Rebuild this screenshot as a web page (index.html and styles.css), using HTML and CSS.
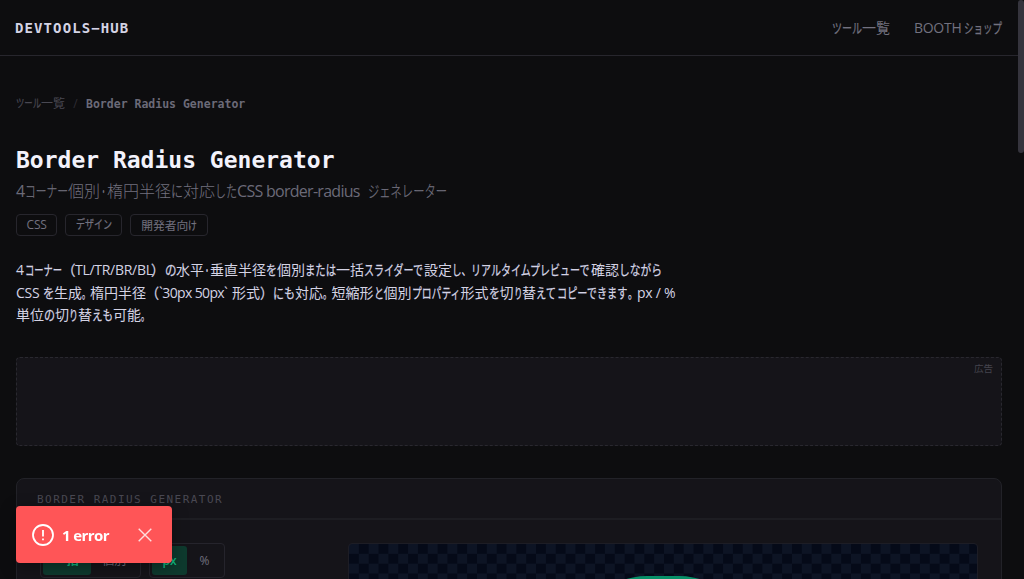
FILE: index.html
```html
<!DOCTYPE html>
<html lang="ja">
<head>
<meta charset="utf-8">
<title>Border Radius Generator</title>
<link rel="stylesheet" href="styles.css">
</head>
<body>
<header class="topbar">
  <div class="brand">DEVTOOLS−HUB</div>
  <nav class="nav">
    <a class="line"><span class="run" style="--n:3;--w:30">ツール</span><span>一覧</span></a>
    <a class="line"><span class="lat" style="--w:50">BOOTH</span><span class="run" style="--n:4;--w:38">ショップ</span></a>
  </nav>
</header>
<main class="page">
  <div class="crumbs">
    <a class="line"><span class="run" style="--n:3;--w:25">ツール</span><span>一覧</span></a>
    <span class="slash">/</span>
    <span class="current">Border Radius Generator</span>
  </div>
  <h1 class="title">Border Radius Generator</h1>
  <p class="subtitle line"><span class="lat" style="--w:9">4</span><span class="run" style="--n:4;--w:43">コーナー</span><span>個別</span><span class="run" style="--n:1;--w:7">・</span><span>楕円半径</span><span class="run" style="--n:1;--w:12">に</span><span>対応</span><span class="run" style="--n:2;--w:22">した</span><span class="lat" style="--w:131">CSS border-radius</span><span class="run" style="--n:7;--w:79">ジェネレーター</span></p>
  <div class="tags">
    <span class="tag line"><span class="lat" style="--w:20">CSS</span></span>
    <span class="tag line"><span class="run" style="--n:4;--w:36">デザイン</span></span>
    <span class="tag line"><span>開発者向</span><span class="run" style="--n:1;--w:9">け</span></span>
  </div>
  <div class="description">
    <div class="line"><span class="lat" style="--w:8.5">4</span><span class="run" style="--n:4;--w:37">コーナー</span><span class="run" style="--n:1;--w:13.5">（</span><span class="lat" style="--w:76">TL/TR/BR/BL</span><span class="run" style="--n:1;--w:13.5">）</span><span class="run" style="--n:1;--w:11.5">の</span><span>水平</span><span class="run" style="--n:1;--w:6">・</span><span>垂直半径</span><span class="run" style="--n:1;--w:11">を</span><span>個別</span><span class="run" style="--n:3;--w:31">または</span><span>一括</span><span class="run" style="--n:6;--w:60">スライダーで</span><span>設定</span><span class="run" style="--n:2;--w:19">し、</span><span class="run" style="--n:12;--w:120">リアルタイムプレビューで</span><span>確認</span><span class="run" style="--n:4;--w:43">しながら</span></div>
    <div class="line"><span class="lat" style="--w:26.5">CSS</span><span class="run" style="--n:1;--w:11.5">を</span><span>生成</span><span class="run" style="--n:1;--w:8">。</span><span>楕円半径</span><span class="run" style="--n:1;--w:13">（</span><span class="lat tight" style="--w:73">`30px 50px`</span><span>形式</span><span class="run" style="--n:1;--w:13">）</span><span class="run" style="--n:2;--w:22">にも</span><span>対応</span><span class="run" style="--n:1;--w:8.5">。</span><span>短縮形</span><span class="run" style="--n:1;--w:10">と</span><span>個別</span><span class="run" style="--n:5;--w:49">プロパティ</span><span>形式</span><span class="run" style="--n:1;--w:11">を</span><span>切</span><span class="run" style="--n:1;--w:8.5">り</span><span>替</span><span class="run" style="--n:2;--w:20.5">えて</span><span class="run" style="--n:7;--w:71">コピーできます</span><span class="run" style="--n:1;--w:9.5">。</span><span class="lat" style="--w:39">px / %</span></div>
    <div class="line"><span>単位</span><span class="run" style="--n:1;--w:11">の</span><span>切</span><span class="run" style="--n:1;--w:9">り</span><span>替</span><span class="run" style="--n:2;--w:21">えも</span><span>可能</span><span class="run" style="--n:1;--w:8">。</span></div>
  </div>
  <div class="ad">広告</div>
  <section class="card">
    <div class="card-head">BORDER RADIUS GENERATOR</div>
    <div class="card-body">
      <div class="controls">
        <div class="group group-mode"><span class="opt on">一括</span><span class="opt">個別</span></div>
        <div class="group group-unit"><span class="opt on">px</span><span class="opt">%</span></div>
      </div>
      <div class="preview"><div class="shape"></div></div>
    </div>
  </section>
</main>
<div class="toast">
  <svg class="warn" viewBox="0 0 22 22"><circle cx="11" cy="11" r="10"/><path d="M11 6v6.5M11 14.5v1.8"/></svg>
  <span class="toast-text">1 error</span>
  <svg class="close" viewBox="0 0 14 14"><path d="M.7.7l12.6 12.6M13.3.7L.7 13.3"/></svg>
</div>
<div class="scroll-thumb"></div>
</body>
</html>
```
FILE: styles.css
```css
* { box-sizing: border-box; }
body {
  display: flex;
  flex-direction: column;
  margin: 0;
  height: 579px;
  overflow: hidden;
  background: #0d0d0f;
  color: #d4d3e4;
  font-family: "Open Sans", "Noto Sans CJK JP", sans-serif;
  font-size: 14px;
}
.line { display: flex; white-space: pre; --fs: 14; }
.line > span { flex: none; }
/* Kana runs are condensed: --n glyphs set into --w pixels. */
.run {
  width: calc(var(--w) * 1px);
  transform: scaleX(calc(var(--w) / (var(--n) * var(--fs))));
  transform-origin: left;
  -webkit-text-stroke: .25px currentColor;
}
.lat { width: calc(var(--w) * 1px); letter-spacing: -.02em; }
.lat.tight { letter-spacing: -.045em; }
.topbar {
  display: flex;
  flex: none;
  align-items: center;
  justify-content: space-between;
  width: 1018px;
  height: 56px;
  padding: 0 16px 0 15px;
  border-bottom: 1px solid #27262d;
}
.brand { font: bold 14px/20px "DejaVu Sans Mono", monospace; letter-spacing: 1.1px; color: #d4d3e4; }
.nav { display: flex; gap: 24px; color: #72717f; line-height: 20px; }
.page { flex: 1; min-height: 0; overflow: hidden; width: 1018px; padding: 38px 16px 0; }
.crumbs { display: flex; height: 20px; line-height: 20px; font-size: 12px; color: #494852; }
.crumbs .line { --fs: 12; }
.slash { width: 21px; text-align: center; color: #2d2c34; }
.current { font: bold 11.5px/20px "DejaVu Sans Mono", monospace; color: #6b6a78; }
.title { margin: 30px 0 0; font: bold 23px/32px "DejaVu Sans Mono", monospace; color: #f3f2fb; }
.subtitle { --fs: 16; margin: 2px 0 0; height: 26px; font-size: 16px; font-weight: 300; line-height: 26px; color: #72717f; }
.subtitle > .lat { font-weight: 400; letter-spacing: -.045em; color: #6b6a78; }
.tags { display: flex; gap: 8px; margin-top: 10px; }
.tag { --fs: 12; height: 22px; padding: 0 9.6px; border: 1px solid #27262d; border-radius: 4px; font-size: 12px; line-height: 20px; color: #72717f; }
.tag:last-child { padding: 0 10px; font-size: 11.75px; }
.tag:nth-child(2) { padding: 0 9.5px; }
.description { margin-top: 23px; }
.description .line { height: 22.6px; line-height: 22px; }
.ad { margin-top: 30px; height: 89px; padding: 4px 8px; border: 1px dashed #29282f; border-radius: 4px; background: #151419; text-align: right; font-size: 9.5px; line-height: 13px; color: #45444e; }
.card { margin-top: 32px; height: 500px; border: 1px solid #222228; border-radius: 8px; background: #151419; }
.card-head { height: 41px; padding: 0 20px; border-bottom: 2px solid #1d1d22; font: 11px/41px "DejaVu Sans Mono", monospace; letter-spacing: 1.47px; color: #494852; }
.card-body { display: flex; gap: 123px; padding: 23px 23px 0; }
.controls { display: flex; gap: 8px; }
.group { display: flex; height: 35px; padding: 2px; border: 1px solid #25242c; border-radius: 4px; font-size: 12px; line-height: 29px; text-align: center; color: #72717f; }
.group-mode { width: 101px; }
.group-unit { width: 76px; }
.opt { flex: 1; }
.opt.on { border-radius: 3px; background: #0e3a2e; color: #12b981; font-weight: 600; }
.preview {
  width: 630px;
  height: 300px;
  overflow: hidden;
  border: 1px solid #1d1d25;
  border-radius: 4px;
  background: repeating-conic-gradient(#050a18 0 25%, #0d1424 0 50%) 0 0 / 19.7px 19.7px;
}
.shape { width: 176px; height: 176px; margin: 32px auto 0; border-radius: 72px; background: #079068; }
.toast {
  position: fixed;
  left: 16px;
  top: 506px;
  display: flex;
  align-items: center;
  width: 156px;
  height: 57px;
  padding: 0 20px 0 16px;
  border-radius: 4px;
  background: #ff5557;
  color: #fff;
  box-shadow: 0 4px 16px rgba(0, 0, 0, .35);
}
.toast svg { fill: none; stroke: #fff; stroke-width: 1.8; }
.warn { width: 22px; height: 22px; }
.toast-text { margin-left: 8px; font-size: 15px; font-weight: 700; letter-spacing: -.6px; padding-top: 1px; }
.close { width: 14px; height: 14px; margin-left: auto; opacity: .8; }
.toast .close { stroke-width: 1.4; }
.scroll-thumb { position: fixed; right: 0; top: 0; width: 6px; height: 153px; border-radius: 3px; background: #35343d; }
```
